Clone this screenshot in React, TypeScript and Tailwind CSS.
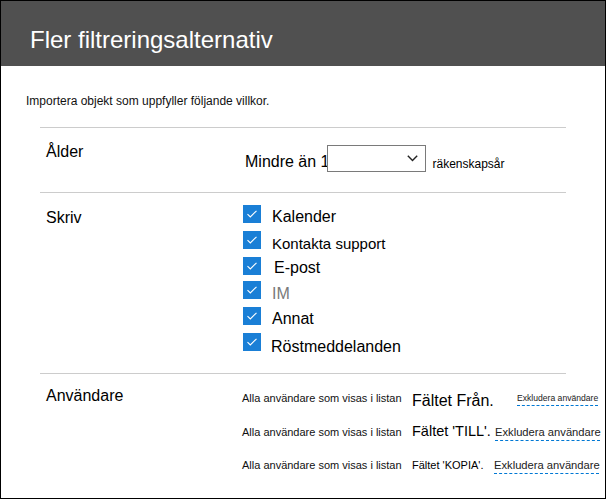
import { ReactNode } from 'react'

const font = "font-['Liberation_Sans',Arial,sans-serif]"

function Section({ label, labelPad, children, className }: { label: string; labelPad: string; children: ReactNode; className: string }) {
  return (
    <div className={`border-t border-[#cccccc] grid grid-cols-[202px_1fr] ${className}`}>
      <div className={`pl-[6px] text-[16px] leading-[20px] ${labelPad}`}>{label}</div>
      <div>{children}</div>
    </div>
  )
}

function Check({ label, textTop, textLeft, size, muted, height }: { label: string; textTop: string; textLeft: string; size: string; muted?: boolean; height: string }) {
  return (
    <div className={`flex items-start ${height}`}>
      <div className="ml-[1px] w-[18px] h-[18px] bg-[#1a7fd6] flex items-center justify-center shrink-0">
        <svg width="12" height="10" viewBox="0 0 12 10" fill="none">
          <path d="M1.5 5.2 L4.3 8 L10.5 1.8" stroke="white" strokeWidth="1.1" />
        </svg>
      </div>
      <span className={`${textTop} ${textLeft} ${size} leading-[18px] ${muted ? 'text-[#7a7a7a]' : 'text-black'}`}>{label}</span>
    </div>
  )
}

function Exclude({ size, className }: { size: string; className?: string }) {
  return (
    <span className={`${size} text-[#222] underline decoration-dashed decoration-[#0078d4] underline-offset-[4px] whitespace-nowrap ${className ?? ''}`}>
      Exkludera användare
    </span>
  )
}

function UserRow({ field, fieldSize, fieldClass, exSize, exClass, mt }: { field: string; fieldSize: string; fieldClass?: string; exSize: string; exClass?: string; mt: string }) {
  return (
    <div className={`flex items-center h-[24px] ${mt}`}>
      <span className="w-[170px] shrink-0 text-[11px] text-[#111] whitespace-nowrap">Alla användare som visas i listan</span>
      <span className={`w-[83px] shrink-0 ${fieldSize} whitespace-nowrap ${fieldClass ?? ''}`}>{field}</span>
      <Exclude size={exSize} className={exClass} />
    </div>
  )
}

export default function App() {
  return (
    <div className={`w-[606px] h-[499px] border border-black bg-white overflow-hidden text-black ${font}`}>
      <div className="h-[65px] bg-[#505050] pl-[29px] pt-[25px]">
        <h1 className="text-[24px] leading-[28px] text-white">Fler filtreringsalternativ</h1>
      </div>

      <p className="mt-[28px] ml-[25px] text-[12px] leading-[15px] text-[#111]">Importera objekt som uppfyller följande villkor.</p>

      <div className="mx-[39px] mt-[18px]">
        <Section label="Ålder" labelPad="pt-[14px]" className="h-[65px]">
          <div className="flex items-start pt-[17px]">
            <span className="ml-[3px] mt-[7px] text-[16px] leading-[20px]">Mindre än 1</span>
            <div className="-ml-[3px] w-[99px] h-[27px] border border-[#7a7a7a] bg-white flex items-center justify-end pr-[7px]">
              <svg width="11" height="7" viewBox="0 0 11 7" fill="none">
                <path d="M0.8 0.8 L5.5 5.6 L10.2 0.8" stroke="#222" strokeWidth="1.4" />
              </svg>
            </div>
            <span className="ml-[7px] mt-[12px] text-[12px] leading-[15px]">räkenskapsår</span>
          </div>
        </Section>

        <Section label="Skriv" labelPad="pt-[15px]" className="h-[181px]">
          <div className="pt-[12px] flex flex-col">
            <Check label="Kalender" textTop="mt-[3px]" textLeft="ml-[11px]" size="text-[16px]" height="h-[26px]" />
            <Check label="Kontakta support" textTop="mt-[4px]" textLeft="ml-[11px]" size="text-[15px]" height="h-[26px]" />
            <Check label="E-post" textTop="mt-[2px]" textLeft="ml-[13px]" size="text-[16px]" height="h-[24px]" />
            <Check label="IM" textTop="mt-[4px]" textLeft="ml-[11px]" size="text-[16px]" muted height="h-[26px]" />
            <Check label="Annat" textTop="mt-[3px]" textLeft="ml-[11px]" size="text-[16px]" height="h-[26px]" />
            <Check label="Röstmeddelanden" textTop="mt-[5px]" textLeft="ml-[10px]" size="text-[16px]" height="h-[26px]" />
          </div>
        </Section>

        <Section label="Användare" labelPad="pt-[12px]" className="h-[126px]">
          <div className="flex flex-col">
            <UserRow mt="mt-[12px]" field="Fältet Från." fieldSize="text-[16px]" fieldClass="translate-y-[3px]" exSize="text-[8.6px]" exClass="ml-[22px]" />
            <UserRow mt="mt-[10px]" field="Fältet 'TILL'." fieldSize="text-[14.5px]" exSize="text-[11.2px]" />
            <UserRow mt="mt-[9px]" field="Fältet 'KOPIA'." fieldSize="text-[11px]" exSize="text-[11.2px]" exClass="-ml-[1px]" />
          </div>
        </Section>
      </div>
    </div>
  )
}
